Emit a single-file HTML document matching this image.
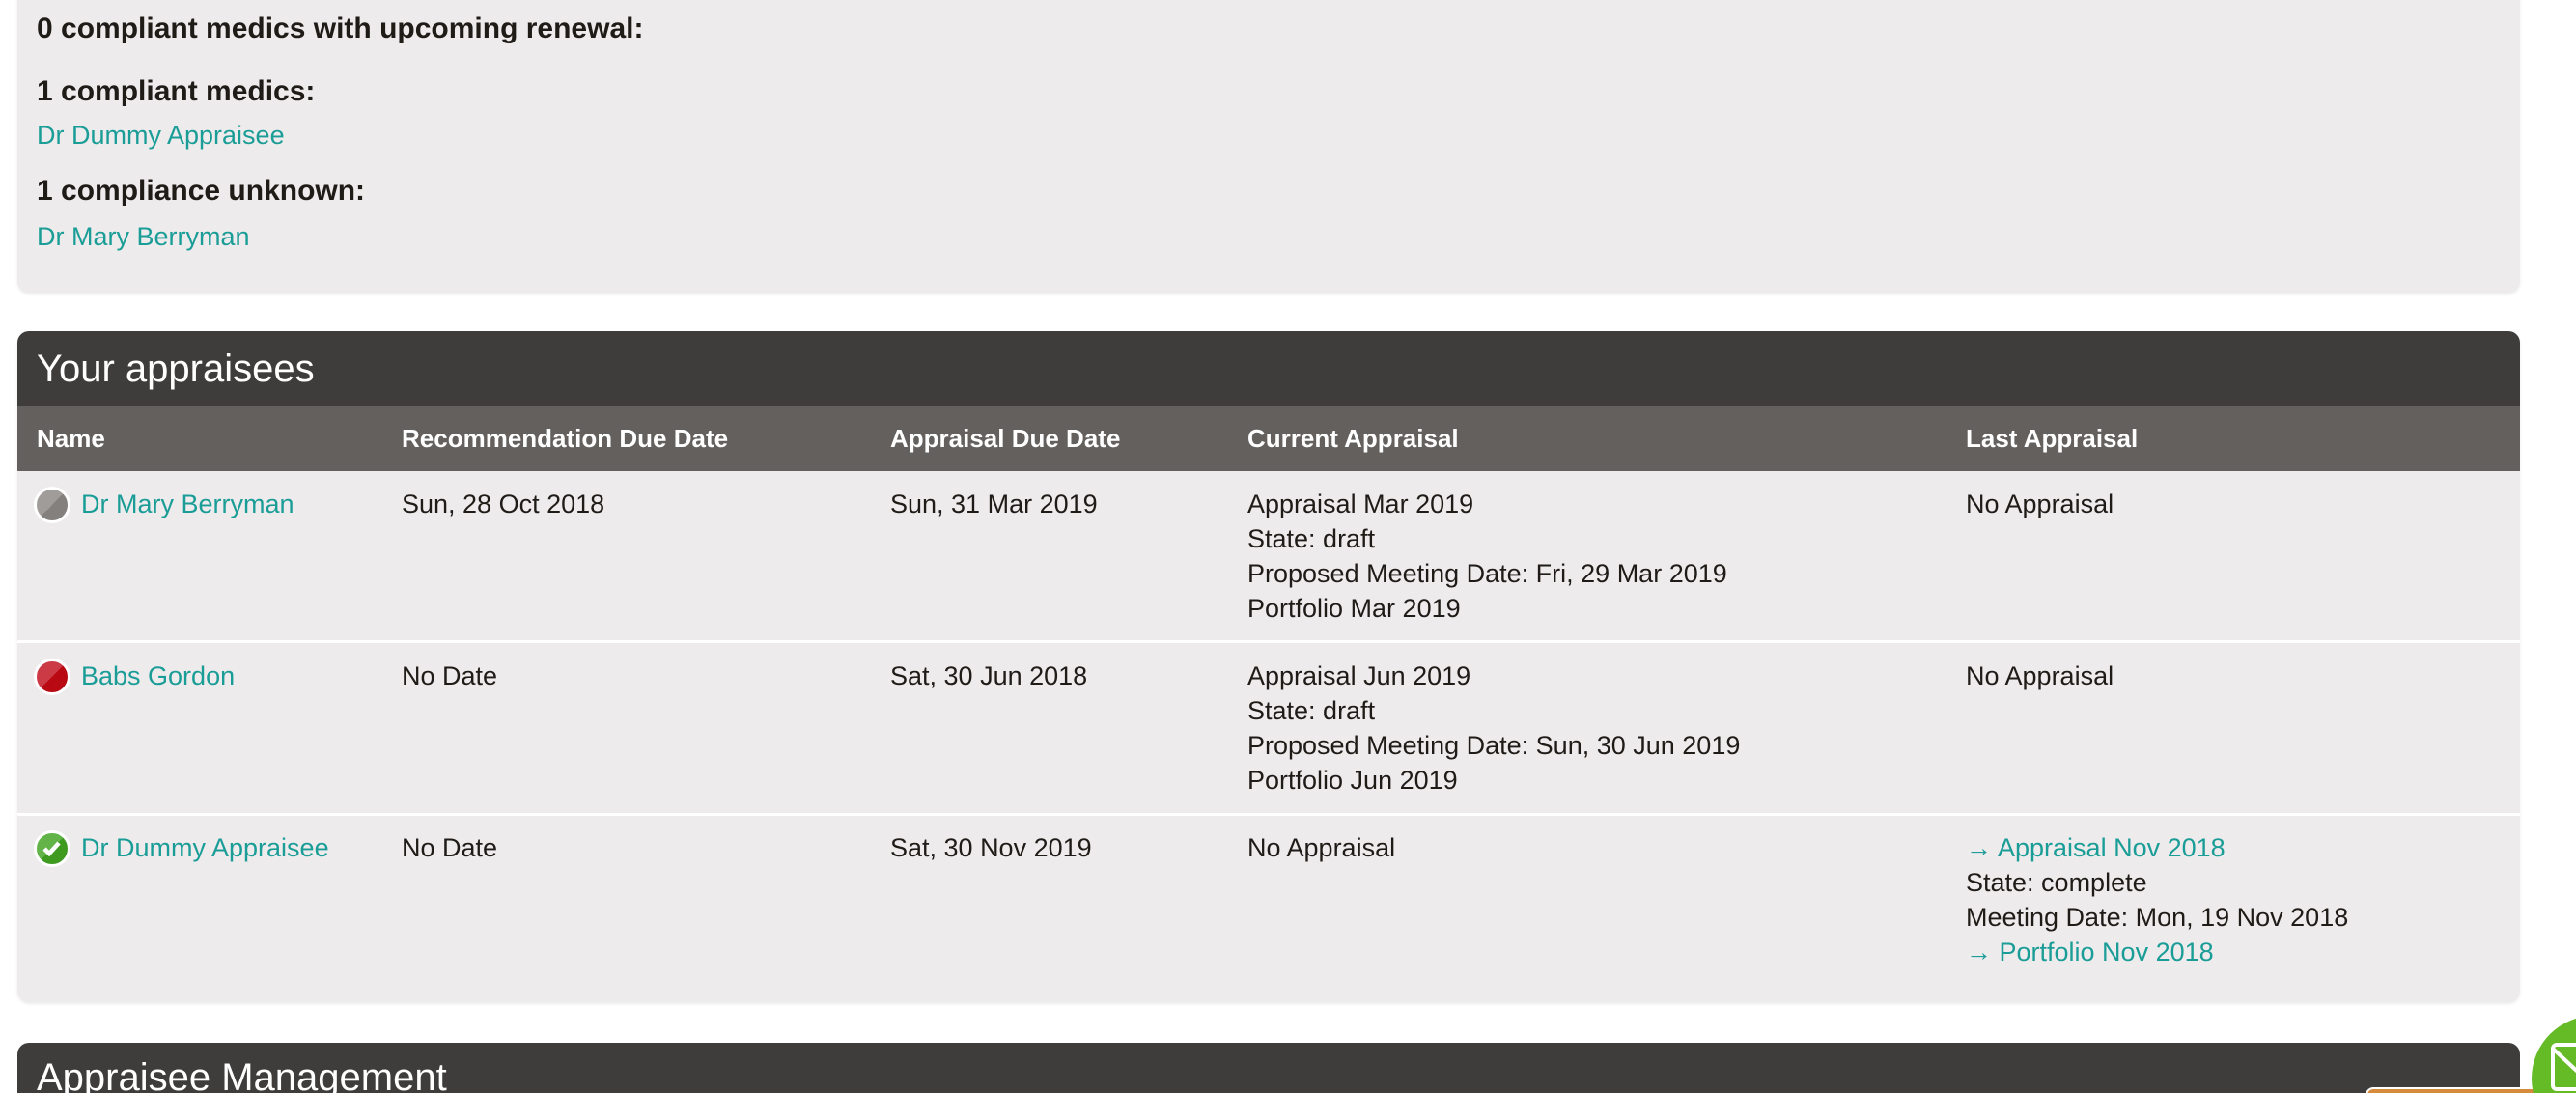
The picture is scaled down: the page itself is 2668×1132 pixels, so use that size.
<!DOCTYPE html>
<html style="width:2668px;height:1132px;overflow:hidden"><head><meta charset="utf-8"><style>
*{margin:0;padding:0;box-sizing:border-box}
body{width:2668px;height:1132px;overflow:hidden;background:#fff;font-family:"Liberation Sans",Arial,sans-serif;color:#1f1c18}
#w{position:relative;width:2668px;height:1132px;overflow:hidden}
.a{position:absolute;white-space:nowrap}
.t{font-size:27px;line-height:36px}
.b{font-size:30px;font-weight:bold;line-height:40px}
.l{color:#1b9d97}
.h{color:#fff;font-size:26px;line-height:36px;font-weight:bold}
.ic{position:absolute;width:38px;height:38px;border-radius:50%;border:3px solid #fff}
</style></head><body><div id="w">
<div class="a" style="left:18px;top:-20px;width:2592px;height:323px;background:#edebec;border-radius:12px;box-shadow:0 2px 3px rgba(0,0,0,.08)"></div>
<div class="a b" style="left:38px;top:10px">0 compliant medics with upcoming renewal:</div>
<div class="a b" style="left:38px;top:75px">1 compliant medics:</div>
<div class="a t l" style="left:38px;top:122px">Dr Dummy Appraisee</div>
<div class="a b" style="left:38px;top:178px">1 compliance unknown:</div>
<div class="a t l" style="left:38px;top:227px">Dr Mary Berryman</div>

<div class="a" style="left:18px;top:343px;width:2592px;height:695px;background:#edebec;border-radius:12px;overflow:hidden;box-shadow:0 2px 3px rgba(0,0,0,.08)">
 <div style="height:77px;background:#3e3d3b"></div>
 <div style="height:68px;background:#63605d"></div>
 <div style="position:absolute;left:0;right:0;top:320px;height:3px;background:#fff"></div>
 <div style="position:absolute;left:0;right:0;top:499px;height:3px;background:#fff"></div>
</div>
<div class="a" style="left:38px;top:358px;color:#fff;font-size:40px;line-height:48px">Your appraisees</div>
<div class="a h" style="left:38px;top:436px">Name</div>
<div class="a h" style="left:416px;top:436px">Recommendation Due Date</div>
<div class="a h" style="left:922px;top:436px">Appraisal Due Date</div>
<div class="a h" style="left:1292px;top:436px">Current Appraisal</div>
<div class="a h" style="left:2036px;top:436px">Last Appraisal</div>

<div class="ic" style="left:35px;top:504px;background:linear-gradient(135deg,#a09c9a 50%,#84807e 50%)"></div>
<div class="a t l" style="left:84px;top:504px">Dr Mary Berryman</div>
<div class="a t" style="left:416px;top:504px">Sun, 28 Oct 2018</div>
<div class="a t" style="left:922px;top:504px">Sun, 31 Mar 2019</div>
<div class="a t" style="left:1292px;top:504px">Appraisal Mar 2019<br>State: draft<br>Proposed Meeting Date: Fri, 29 Mar 2019<br>Portfolio Mar 2019</div>
<div class="a t" style="left:2036px;top:504px">No Appraisal</div>

<div class="ic" style="left:35px;top:682px;background:linear-gradient(135deg,#cc3a45 50%,#b90a14 50%)"></div>
<div class="a t l" style="left:84px;top:682px">Babs Gordon</div>
<div class="a t" style="left:416px;top:682px">No Date</div>
<div class="a t" style="left:922px;top:682px">Sat, 30 Jun 2018</div>
<div class="a t" style="left:1292px;top:682px">Appraisal Jun 2019<br>State: draft<br>Proposed Meeting Date: Sun, 30 Jun 2019<br>Portfolio Jun 2019</div>
<div class="a t" style="left:2036px;top:682px">No Appraisal</div>

<div class="ic" style="left:35px;top:860px;background:linear-gradient(135deg,#62b348 50%,#3f9a20 50%)"><svg width="32" height="32" viewBox="0 0 32 32" style="position:absolute;left:0;top:0"><path d="M8 16l5 5 10-11" stroke="#fff" stroke-width="4.5" fill="none"/></svg></div>
<div class="a t l" style="left:84px;top:860px">Dr Dummy Appraisee</div>
<div class="a t" style="left:416px;top:860px">No Date</div>
<div class="a t" style="left:922px;top:860px">Sat, 30 Nov 2019</div>
<div class="a t" style="left:1292px;top:860px">No Appraisal</div>
<div class="a t" style="left:2036px;top:860px"><span class="l">→ Appraisal Nov 2018</span><br>State: complete<br>Meeting Date: Mon, 19 Nov 2018<br><span class="l">→ Portfolio Nov 2018</span></div>

<div class="a" style="left:18px;top:1080px;width:2592px;height:80px;background:#3e3d3b;border-radius:12px 12px 0 0"></div>
<div class="a" style="left:38px;top:1092px;color:#fff;font-size:40px;line-height:48px">Appraisee Management</div>
<div class="a" style="left:2450px;top:1126px;width:260px;height:20px;background:#d58a3c;border:2px solid #fff;border-radius:8px"></div>
<div class="a" style="left:2622px;top:1052px;width:130px;height:130px;border-radius:50%;background:#64bb26"></div>
<svg class="a" style="left:2640px;top:1078px" width="40" height="60" viewBox="0 0 40 60"><rect x="4" y="4" width="60" height="46" rx="4" fill="none" stroke="#fff" stroke-width="4"/><path d="M4 8l30 28" stroke="#fff" stroke-width="4"/></svg>
</div></body></html>
